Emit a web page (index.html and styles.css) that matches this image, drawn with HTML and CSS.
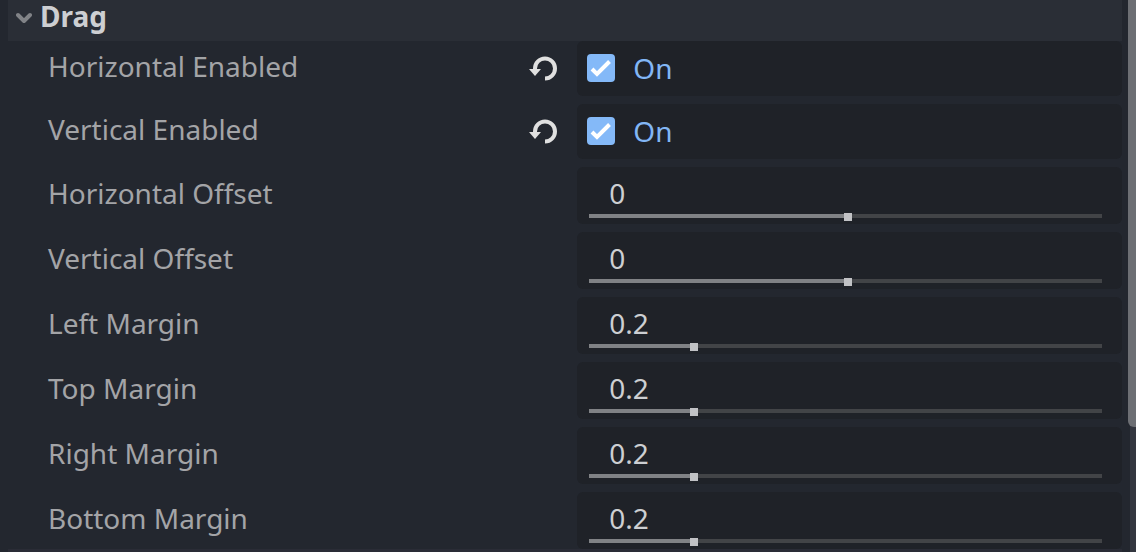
FILE: index.html
```html
<!DOCTYPE html>
<html lang="en">
<head>
  <meta charset="UTF-8">
  <title>Inspector</title>
  <link rel="stylesheet" href="styles.css">
</head>
<body>
  <main class="inspector">
    <h2 class="section">
      <svg class="chevron" width="16" height="12" viewBox="0 0 16 12" aria-hidden="true"><path d="M2 3l6 6 6-6"/></svg>
      Drag
    </h2>

    <div class="row toggle">
      <label class="name" for="hEnabled">Horizontal Enabled</label>
      <button class="revert" type="button" aria-label="Revert Horizontal Enabled">
        <svg width="28" height="26" viewBox="0 0 28 26"><path class="arc" d="M6 15v-1.500a10 10 0 1 1 10 10"/><path class="head" d="M0 14h12l-6 7z"/></svg>
      </button>
      <label class="field check">
        <input type="checkbox" id="hEnabled" checked>
        <span>On</span>
      </label>
    </div>

    <div class="row toggle">
      <label class="name" for="vEnabled">Vertical Enabled</label>
      <button class="revert" type="button" aria-label="Revert Vertical Enabled">
        <svg width="28" height="26" viewBox="0 0 28 26"><path class="arc" d="M6 15v-1.500a10 10 0 1 1 10 10"/><path class="head" d="M0 14h12l-6 7z"/></svg>
      </button>
      <label class="field check">
        <input type="checkbox" id="vEnabled" checked>
        <span>On</span>
      </label>
    </div>

    <div class="row">
      <label class="name" for="hOffset">Horizontal Offset</label>
      <div class="field spin">
        <input class="value" type="text" id="hOffset" value="0">
        <input class="slider" type="range" min="-1" max="1" step="0.01" value="0.01" style="--fill: 51%" aria-label="Horizontal Offset slider">
      </div>
    </div>

    <div class="row">
      <label class="name" for="vOffset">Vertical Offset</label>
      <div class="field spin">
        <input class="value" type="text" id="vOffset" value="0">
        <input class="slider" type="range" min="-1" max="1" step="0.01" value="0.01" style="--fill: 51%" aria-label="Vertical Offset slider">
      </div>
    </div>

    <div class="row">
      <label class="name" for="left">Left Margin</label>
      <div class="field spin">
        <input class="value" type="text" id="left" value="0.2">
        <input class="slider" type="range" min="0" max="1" step="0.01" value="0.2" style="--fill: 20%" aria-label="Left Margin slider">
      </div>
    </div>

    <div class="row">
      <label class="name" for="top">Top Margin</label>
      <div class="field spin">
        <input class="value" type="text" id="top" value="0.2">
        <input class="slider" type="range" min="0" max="1" step="0.01" value="0.2" style="--fill: 20%" aria-label="Top Margin slider">
      </div>
    </div>

    <div class="row">
      <label class="name" for="right">Right Margin</label>
      <div class="field spin">
        <input class="value" type="text" id="right" value="0.2">
        <input class="slider" type="range" min="0" max="1" step="0.01" value="0.2" style="--fill: 20%" aria-label="Right Margin slider">
      </div>
    </div>

    <div class="row">
      <label class="name" for="bottom">Bottom Margin</label>
      <div class="field spin">
        <input class="value" type="text" id="bottom" value="0.2">
        <input class="slider" type="range" min="0" max="1" step="0.01" value="0.2" style="--fill: 20%" aria-label="Bottom Margin slider">
      </div>
    </div>

    <div class="next-section"></div>
  </main>

  <div class="scrollbar">
    <div class="thumb" style="height: 77.4%"></div>
  </div>
</body>
</html>
```
FILE: styles.css
```css
* {
  box-sizing: border-box;
}
body {
  display: flex;
  min-height: 100vh;
  margin: 0;
  background-color: #23272f;
  color: #a3a4a7;
  font-family: "Noto Sans", sans-serif;
  font-size: 28px;
  line-height: 38px;
}
.inspector {
  display: flex;
  flex: 1;
  flex-direction: column;
  padding: 0 6px 0 8px;
}
.section {
  display: flex;
  align-items: flex-start;
  gap: 8px;
  margin: 0;
  padding: 0 8px 9px;
  background-color: #2a2e36;
  color: #cdcfd2;
  font-size: 28px;
  line-height: 32px;
}
.chevron {
  margin-top: 12px;
  fill: none;
  stroke: #818387;
  stroke-width: 4;
  stroke-linecap: round;
  stroke-linejoin: round;
}
.row {
  display: grid;
  grid-template-columns: 1fr auto 48.9%;
  margin-bottom: 8px;
}
.name {
  padding: 7px 0 0 40px;
}
.toggle .name {
  padding-top: 6px;
}
.revert {
  display: flex;
  align-items: center;
  padding: 0 20px 2px;
  background: none;
  border: none;
  cursor: pointer;
}
.arc {
  fill: none;
  stroke: #e0e0e0;
  stroke-width: 4;
}
.head {
  fill: #e0e0e0;
}
.field {
  grid-column: 3;
  background-color: #1f2228;
  border-radius: 6px;
}
.check {
  display: flex;
  align-items: center;
  gap: 18px;
  height: 55px;
  padding: 0 10px 2px;
  color: #82b6f5;
}
.check input {
  appearance: none;
  width: 28px;
  height: 28px;
  margin: 0;
  border-radius: 4px;
}
.check input:checked {
  background: #84b9f8 url("data:image/svg+xml,%3Csvg xmlns='http://www.w3.org/2000/svg' viewBox='0 0 28 28'%3E%3Cpath d='M5 15l5 5L22.500 7.500' fill='none' stroke='white' stroke-width='4'/%3E%3C/svg%3E");
}
.spin {
  display: flex;
  flex-direction: column;
  justify-content: space-between;
  height: 57px;
  padding: 7px 20px 4px 12px;
}
.value {
  width: 100%;
  height: 38px;
  padding: 0 20px;
  background: none;
  border: none;
  outline: none;
  color: #cdcfd2;
  font: inherit;
}
.slider {
  appearance: none;
  width: 100%;
  height: 8px;
  margin: 0;
  background: none;
}
.slider::-webkit-slider-runnable-track {
  height: 4px;
  background: linear-gradient(to right, #808285 var(--fill), #424447 var(--fill));
}
.slider::-webkit-slider-thumb {
  appearance: none;
  width: 8px;
  height: 8px;
  margin-top: -1px;
  background-color: #c1c2c5;
}
/* top edge of the section below */
.next-section {
  flex: 1;
  margin-top: -8px;
  background-color: #2a2c36;
}
.scrollbar {
  width: 8px;
  background: linear-gradient(to right, transparent 2px, #33363f 2px);
}
.thumb {
  background-color: #6d6f74;
  border-radius: 0 0 0 6px;
}
```
